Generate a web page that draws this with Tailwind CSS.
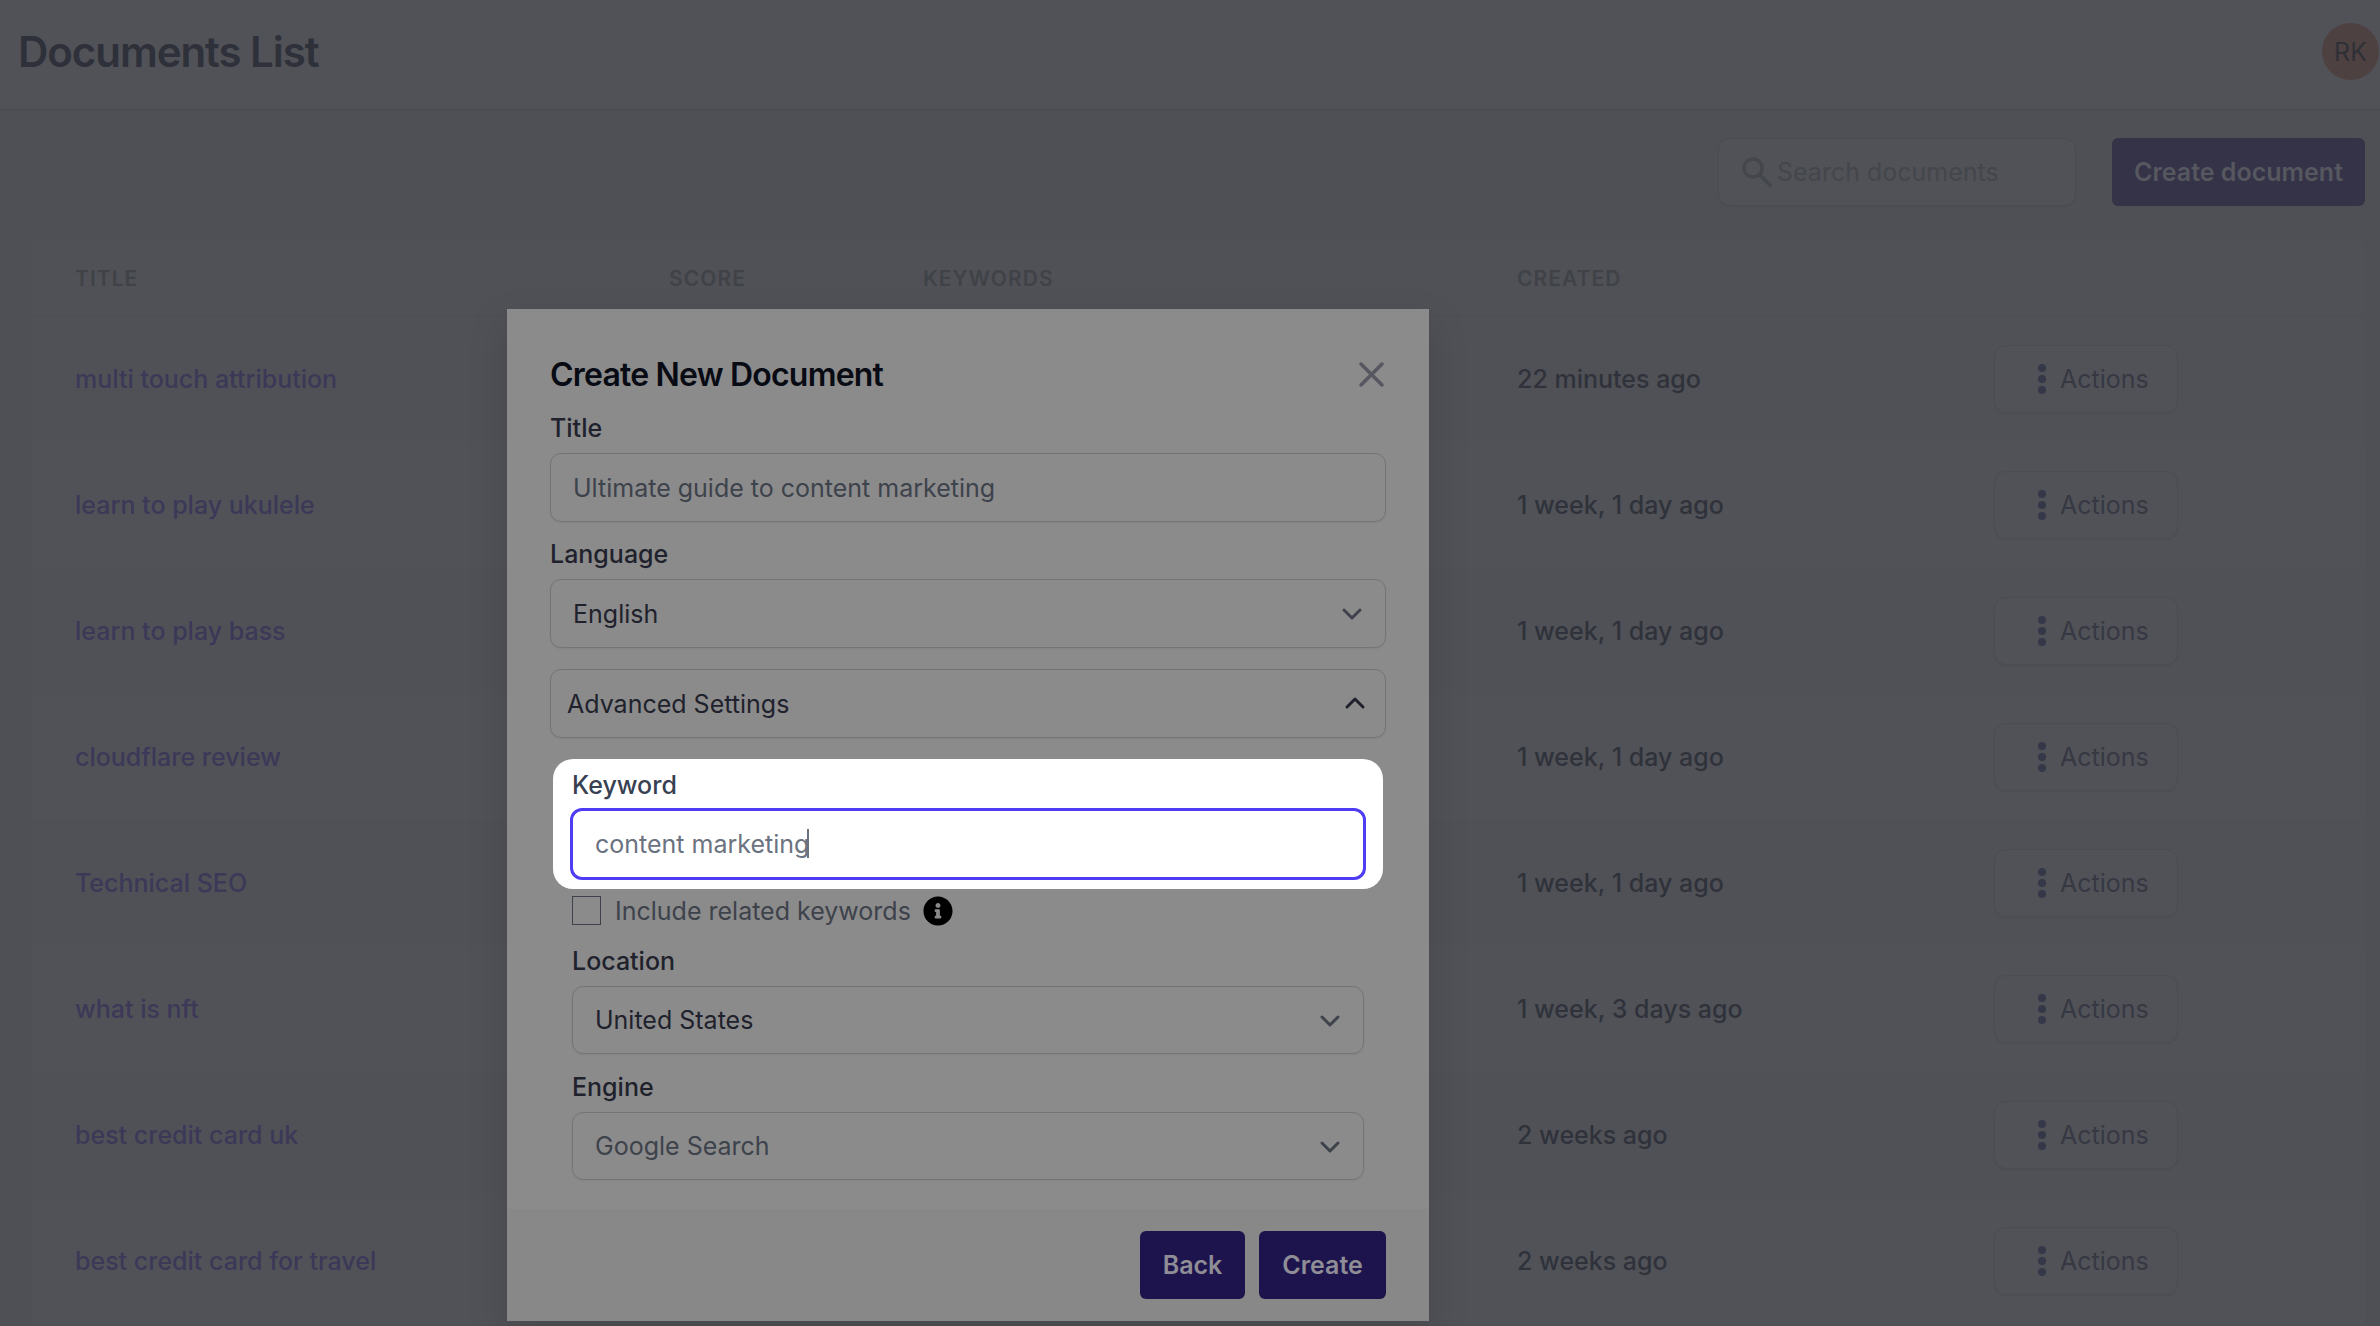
<!DOCTYPE html>
<html lang="en">
<head>
<meta charset="utf-8">
<meta name="viewport" content="width=device-width, initial-scale=1">
<title>Documents List</title>
<script src="https://cdn.jsdelivr.net/npm/@tailwindcss/browser@4"></script>
</head>
<body class="relative min-h-screen overflow-hidden bg-[#4f5055] font-['Inter',sans-serif] text-[25px] leading-[34px]">
<header class="flex h-[111px] items-center justify-between border-b-2 border-[#4b4c51] bg-[#515257] pr-px pb-1.5 pl-[18px]">
  <h1 class="text-[42px] leading-[48px] font-semibold tracking-tight text-[#2e303a]">Documents List</h1>
  <button class="flex size-[57px] items-center justify-center rounded-full bg-[#4e4142] text-[#2f3036]">RK</button>
</header>
<main>
  <div class="flex justify-end gap-9 pt-[27px] pr-[15px]">
    <label class="flex h-[68px] w-[358px] items-center gap-1 rounded-xl border border-[#4c4d52] bg-[#515257] pl-[22px] text-[#43464a] shadow-xs">
      <svg class="size-8 shrink-0" viewBox="0 0 32 32" fill="none" stroke="currentColor" stroke-width="3.500" stroke-linecap="round" aria-hidden="true"><circle cx="12" cy="12" r="9"/><path d="M19 19l10 10"/></svg>
      <input type="search" aria-label="Search documents" placeholder="Search documents" class="w-full min-w-0 bg-transparent outline-none placeholder:text-[#43464a]">
    </label>
    <button class="h-[68px] w-[253px] rounded-md bg-[#343348] font-semibold whitespace-nowrap text-[#56575f]">Create document</button>
  </div>
  <div class="mt-9 mr-[15px] ml-8">
    <table class="w-full table-fixed text-left">
      <colgroup><col class="w-[594px]"><col class="w-[254px]"><col class="w-[594px]"><col class="w-[476px]"><col></colgroup>
      <thead class="bg-[#505156] text-[21px] tracking-wider text-[#3f4247]">
        <tr class="h-[74px] border-b border-[#4d4e53]">
          <th class="pl-[43px] font-semibold">TITLE</th><th class="pl-[43px] font-semibold">SCORE</th><th class="pl-[43px] font-semibold">KEYWORDS</th><th class="pl-[43px] font-semibold">CREATED</th><th aria-label="Row menu"></th>
        </tr>
      </thead>
      <tbody id="rows" class="font-medium"></tbody>
    </table>
  </div>
</main>

<div class="absolute inset-0 pt-[309px] pl-[507px]">
  <section role="dialog" aria-labelledby="dialog-title" class="w-[922px] bg-[#8b8b8b] text-[#1f222c] shadow-[0_16px_36px_4px_rgba(0,0,0,0.1)]">
    <form class="px-[43px] pt-[47px] pb-[29px]">
      <div class="flex items-center justify-between">
        <h2 id="dialog-title" class="text-[32px] leading-[38px] font-semibold tracking-tight text-[#090b14]">Create New Document</h2>
        <button type="button" aria-label="Close" class="text-[#575760]"><svg class="size-[30px]" viewBox="0 0 30 30" fill="none" stroke="currentColor" stroke-width="3.500" stroke-linecap="round"><path d="M5 4l21 21M26 4L5 25"/></svg></button>
      </div>
      <label for="title" class="mt-[17px] block font-medium">Title</label>
      <input id="title" placeholder="Ultimate guide to content marketing" class="mt-2 block h-[69px] w-full rounded-[11px] border border-[#747474] px-[22px] shadow-xs outline-none placeholder:text-[#3d424b]">
      <label for="language" class="mt-[15px] block font-medium">Language</label>
      <div class="relative mt-2">
        <select id="language" class="block h-[69px] w-full appearance-none rounded-[11px] border border-[#747474] px-[22px] shadow-xs"><option>English</option></select>
        <svg class="pointer-events-none absolute top-[22px] right-[22px] size-6" viewBox="0 0 24 24" fill="none" stroke="#3d424b" stroke-width="3" stroke-linecap="round" stroke-linejoin="round"><path d="M4 9l8 8 8-8"/></svg>
      </div>
      <button type="button" aria-expanded="true" class="mt-[21px] flex h-[69px] w-full items-center justify-between rounded-[11px] border border-[#747474] pr-[18px] pl-4 shadow-xs">
        Advanced Settings
        <svg class="size-6" viewBox="0 0 24 24" fill="none" stroke="currentColor" stroke-width="3" stroke-linecap="round" stroke-linejoin="round"><path d="M4 15l8-8 8 8"/></svg>
      </button>
      <div class="mx-[3px] mt-[21px] h-[130px] rounded-[20px] bg-white px-[17px] pt-[9px]">
        <label for="keyword" class="ml-0.5 block font-medium text-[#374151]">Keyword</label>
        <div class="relative mt-1.5">
          <input id="keyword" value="content marketing" class="block h-[72px] w-full rounded-xl border-3 border-[#4f3cf5] bg-white px-[22px] text-[#6b7280] caret-transparent outline-none">
          <span class="absolute top-[21px] left-[237px] h-[29px] w-0.5 bg-[#6b7280]"></span>
        </div>
      </div>
      <div class="px-[22px]">
        <div class="mt-[7px] flex h-[29px] items-center">
          <input id="related" type="checkbox" class="size-[29px] appearance-none border border-[#3d424b]">
          <label for="related" class="ml-3.5 text-[#3d424b]">Include related keywords</label>
          <svg class="ml-3 size-[30px]" viewBox="0 0 512 512" role="img" aria-label="Information"><path fill="#000" d="M256 8C119 8 8 119 8 256s111 248 248 248 248-111 248-248S393 8 256 8zm0 110c23.200 0 42 18.800 42 42s-18.800 42-42 42-42-18.800-42-42 18.800-42 42-42zm56 254c0 6.600-5.400 12-12 12h-88c-6.600 0-12-5.400-12-12v-24c0-6.600 5.400-12 12-12h12v-64h-12c-6.600 0-12-5.400-12-12v-24c0-6.600 5.400-12 12-12h64c6.600 0 12 5.400 12 12v100h12c6.600 0 12 5.400 12 12v24z"/></svg>
        </div>
        <label for="location" class="mt-[19px] block font-medium">Location</label>
        <div class="relative mt-2">
          <select id="location" class="block h-[68px] w-full appearance-none rounded-[11px] border border-[#747474] px-[22px] shadow-xs"><option>United States</option></select>
          <svg class="pointer-events-none absolute top-[22px] right-[22px] size-6" viewBox="0 0 24 24" fill="none" stroke="#3d424b" stroke-width="3" stroke-linecap="round" stroke-linejoin="round"><path d="M4 9l8 8 8-8"/></svg>
        </div>
        <label for="engine" class="mt-4 block font-medium">Engine</label>
        <div class="relative mt-2">
          <select id="engine" class="block h-[68px] w-full appearance-none rounded-[11px] border border-[#747474] px-[22px] text-[#3d424b] shadow-xs"><option>Google Search</option></select>
          <svg class="pointer-events-none absolute top-[22px] right-[22px] size-6" viewBox="0 0 24 24" fill="none" stroke="#3d424b" stroke-width="3" stroke-linecap="round" stroke-linejoin="round"><path d="M4 9l8 8 8-8"/></svg>
        </div>
      </div>
    </form>
    <footer class="flex justify-end gap-3.5 bg-[#888888] px-[43px] py-[22px] font-semibold text-[#8f8d96]">
      <button class="h-[68px] w-[105px] rounded-md bg-[#1e144d]">Back</button>
      <button class="h-[68px] w-[127px] rounded-md bg-[#1e144d]">Create</button>
    </footer>
  </section>
</div>
<script>
const documents = [
  ["multi touch attribution", "22 minutes ago"],
  ["learn to play ukulele", "1 week, 1 day ago"],
  ["learn to play bass", "1 week, 1 day ago"],
  ["cloudflare review", "1 week, 1 day ago"],
  ["Technical SEO", "1 week, 1 day ago"],
  ["what is nft", "1 week, 3 days ago"],
  ["best credit card uk", "2 weeks ago"],
  ["best credit card for travel", "2 weeks ago"]
];
document.getElementById("rows").innerHTML = documents.map(([title, created]) => `
<tr class="h-[126px] odd:bg-[#505156] even:bg-[#515257]">
  <td class="pl-[43px]"><a href="#" class="text-[#3b3858]">${title}</a></td><td></td><td></td>
  <td class="pl-[43px] text-[#2f323b]">${created}</td>
  <td class="pl-11"><button class="flex h-[68px] w-[184px] items-center gap-3.5 rounded-xl border border-[#4c4d52] bg-[#515257] pl-[43px] font-normal text-[#363843] shadow-xs"><svg class="h-[30px] w-2 shrink-0" viewBox="0 0 8 30" fill="#353848"><circle cx="4" cy="4" r="4"/><circle cx="4" cy="15" r="4"/><circle cx="4" cy="26" r="4"/></svg>Actions</button></td>
</tr>`).join("");
</script>
</body>
</html>
